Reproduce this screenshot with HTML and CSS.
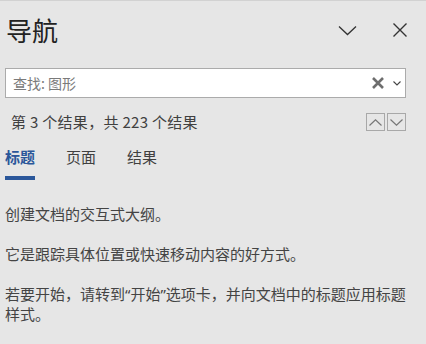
FILE: index.html
```html
<!DOCTYPE html>
<html lang="zh-CN">
<head>
<meta charset="utf-8">
<title>导航</title>
<link rel="stylesheet" href="styles.css">
</head>
<body>
<div class="pane">
  <header class="header">
    <h1 class="title">导航</h1>
    <div class="header-icons">
      <svg class="icon-chevron" width="19" height="11" viewBox="0 0 19 11"><path d="M1 1.5 L9.5 9.5 L18 1.5" fill="none" stroke="#333" stroke-width="1.3"/></svg>
      <svg class="icon-close" width="16" height="16" viewBox="0 0 16 16"><path d="M1.5 1.5 L14.5 14.5 M14.5 1.5 L1.5 14.5" fill="none" stroke="#333" stroke-width="1.4"/></svg>
    </div>
  </header>
  <div class="search">
    <span class="search-text">查找: 图形</span>
    <svg class="icon-clear" width="12" height="12" viewBox="0 0 12 12"><path d="M1 1 L11 11 M11 1 L1 11" fill="none" stroke="#6e6e6e" stroke-width="2.6"/></svg>
    <svg class="icon-drop" width="8" height="5" viewBox="0 0 8 5"><path d="M0.5 0.5 L4 4 L7.5 0.5" fill="none" stroke="#444" stroke-width="1.1"/></svg>
  </div>
  <div class="results">
    <span class="results-text">第 3 个结果，共 223 个结果</span>
    <div class="nav-btns">
      <span class="nav-btn"><svg width="13" height="7" viewBox="0 0 13 7"><path d="M0.5 6.5 L6.5 0.8 L12.5 6.5" fill="none" stroke="#777" stroke-width="1.2"/></svg></span>
      <span class="nav-btn"><svg width="13" height="7" viewBox="0 0 13 7"><path d="M0.5 0.5 L6.5 6.2 L12.5 0.5" fill="none" stroke="#777" stroke-width="1.2"/></svg></span>
    </div>
  </div>
  <nav class="tabs">
    <span class="tab active">标题</span>
    <span class="tab">页面</span>
    <span class="tab">结果</span>
  </nav>
  <div class="content">
    <p>创建文档的交互式大纲。</p>
    <p>它是跟踪具体位置或快速移动内容的好方式。</p>
    <p>若要开始，请转到“开始”选项卡，并向文档中的标题应用标题样式。</p>
  </div>
</div>
</body>
</html>
```

FILE: styles.css
```css
* { box-sizing: border-box; }
html, body { margin: 0; padding: 0; }
body {
  background: #e6e6e6;
  font-family: "Noto Sans CJK SC", "Noto Sans", sans-serif;
  width: 426px;
  height: 344px;
  overflow: hidden;
}
.pane {
  border-top: 1px solid #d2d2d2;
  height: 344px;
}
.header {
  display: flex;
  align-items: center;
  justify-content: space-between;
  height: 56px;
  padding: 2px 0 0 6px;
}
.title {
  margin: 0;
  font-size: 26px;
  font-weight: 400;
  line-height: 30px;
  color: #222;
}
.header-icons {
  display: flex;
  align-items: center;
  gap: 35px;
  padding-right: 18px;
}
.icon-chevron, .icon-close { display: block; }
.search {
  margin: 11px 20px 0 5px;
  height: 30px;
  border: 1px solid #ababab;
  background: #fff;
  display: flex;
  align-items: center;
  padding: 0 0 0 7px;
}
.search-text {
  flex: 1;
  font-size: 14px;
  color: #7a7a7a;
  line-height: 20px;
}
.icon-clear { display: block; margin-right: 9px; }
.icon-drop { display: block; margin-right: 4px; }
.results {
  display: flex;
  align-items: center;
  justify-content: space-between;
  margin: 15px 20px 0 11px;
  height: 18px;
}
.results-text {
  font-size: 15px;
  color: #404040;
  line-height: 18px;
  letter-spacing: 0.3px;
}
.nav-btns { display: flex; gap: 2px; }
.nav-btn {
  width: 19px;
  height: 18px;
  border: 1px solid #a8a8a8;
  display: flex;
  align-items: center;
  justify-content: center;
}
.nav-btn svg { display: block; }
.tabs {
  display: flex;
  gap: 31px;
  margin: 16px 0 0 5px;
}
.tab {
  font-size: 15px;
  line-height: 20px;
  color: #404040;
  padding-bottom: 9px;
  border-bottom: 4px solid transparent;
}
.tab.active {
  color: #2b579a;
  font-weight: 700;
  border-bottom-color: #2b579a;
}
.content {
  margin: 24px 10px 0 5px;
}
.content p {
  margin: 0 0 20px;
  font-family: "Noto Sans", "Noto Sans CJK SC", sans-serif;
  font-size: 15px;
  line-height: 20px;
  color: #444;
}
```
